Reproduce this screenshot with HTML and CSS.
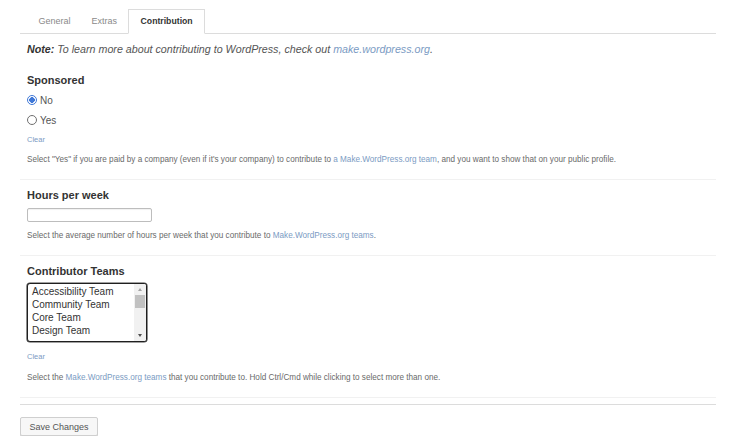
FILE: index.html
```html
<!DOCTYPE html>
<html lang="en">
<head>
<meta charset="utf-8">
<title>Contribution</title>
<link rel="stylesheet" href="styles.css">
</head>
<body>
<div class="wrap">
  <nav class="tabs">
    <a class="tab">General</a>
    <a class="tab">Extras</a>
    <a class="tab active">Contribution</a>
  </nav>

  <p class="note"><strong>Note:</strong> To learn more about contributing to WordPress, check out <a class="link" href="#">make.wordpress.org</a>.</p>

  <section class="field">
    <h3 class="label">Sponsored</h3>
    <label class="radio-row"><input type="radio" name="sp" class="radio" checked><span>No</span></label>
    <label class="radio-row"><input type="radio" name="sp" class="radio"><span>Yes</span></label>
    <a class="clear" href="#">Clear</a>
    <p class="desc desc-sp">Select "Yes" if you are paid by a company (even if it's your company) to contribute to <a class="link" href="#">a Make.WordPress.org team</a>, and you want to show that on your public profile.</p>
  </section>

  <section class="field">
    <h3 class="label">Hours per week</h3>
    <input type="text" class="text-input">
    <p class="desc desc-hours">Select the average number of hours per week that you contribute to <a class="link" href="#">Make.WordPress.org teams</a>.</p>
  </section>

  <section class="field">
    <h3 class="label">Contributor Teams</h3>
    <div class="listbox" role="listbox" aria-multiselectable="true">
      <div class="options">
        <div class="option" role="option">Accessibility Team</div>
        <div class="option" role="option">Community Team</div>
        <div class="option" role="option">Core Team</div>
        <div class="option" role="option">Design Team</div>
      </div>
      <div class="scrollbar">
        <span class="arrow up"></span>
        <span class="thumb"></span>
        <span class="arrow down"></span>
      </div>
    </div>
    <a class="clear clear-teams" href="#">Clear</a>
    <p class="desc desc-teams">Select the <a class="link" href="#">Make.WordPress.org teams</a> that you contribute to. Hold Ctrl/Cmd while clicking to select more than one.</p>
  </section>

  <div class="footer">
    <button class="btn" type="button">Save Changes</button>
  </div>
</div>
</body>
</html>
```

FILE: styles.css
```css
* { box-sizing: border-box; }
html, body { margin: 0; padding: 0; background: #fff; }
body {
  font-family: "Liberation Sans", Arial, sans-serif;
  color: #555;
}
.wrap {
  width: 696px;
  margin-left: 20px;
  padding-top: 9px;
}
.tabs {
  display: flex;
  height: 25px;
  padding-left: 8px;
  border-bottom: 1px solid #dcdcdc;
}
.tab {
  display: flex;
  align-items: center;
  height: 24px;
  padding: 0 10.5px;
  font-size: 9px;
  color: #8a8a8a;
}
.tab.active {
  height: 25px;
  padding: 0 11px 1px 12px;
  background: #fff;
  border: 1px solid #dcdcdc;
  border-bottom-color: #fff;
  font-size: 8.7px;
  font-weight: bold;
  color: #333;
}
.note {
  margin: 8px 0 9px 7px;
  font-size: 10.7px;
  line-height: 14px;
  font-style: italic;
  color: #555;
}
.note strong { color: #333; }
.link { color: #7b9bc3; text-decoration: none; }
.field {
  padding: 8px 0 13px 7px;
  border-bottom: 1px solid #f1f1f1;
}
.label {
  margin: 0;
  font-size: 11px;
  line-height: 14px;
  font-weight: bold;
  color: #333;
}
.radio-row {
  display: flex;
  align-items: center;
  height: 20px;
  font-size: 10px;
  color: #555;
}
.radio-row:first-of-type { margin-top: 3px; }
.radio {
  appearance: none;
  -webkit-appearance: none;
  width: 10px;
  height: 10px;
  margin: 0 3px 0 0;
  border: 1px solid #6f6f6f;
  border-radius: 50%;
  background: #fff;
}
.radio:checked {
  border-color: #3f78d8;
  background: radial-gradient(circle, #3f78d8 0 2.6px, #fff 3px);
}
.clear {
  display: block;
  margin-top: 5px;
  font-size: 7.5px;
  line-height: 10px;
  color: #7b9bc3;
  text-decoration: none;
}
.desc {
  margin: 9px 0 0;
  font-size: 8.17px;
  line-height: 12px;
  color: #6a6a6a;
}
.desc-hours { margin-top: 8px; }
.text-input {
  display: block;
  width: 125px;
  height: 14px;
  margin-top: 6px;
  border: 1px solid #bdbdbd;
  border-radius: 2px;
  box-shadow: inset 0 1px 1px rgba(0,0,0,.06);
  padding: 0;
}
.listbox {
  display: flex;
  width: 120px;
  height: 59px;
  margin-top: 5px;
  border: 1px solid #1f1f1f;
  border-radius: 3px;
  box-shadow: 0 0 0 0.6px #444;
  overflow: hidden;
  background: #fff;
}
.options {
  flex: 1;
  padding: 1px 0 0 4px;
}
.option {
  font-size: 10px;
  line-height: 13px;
  color: #333;
  white-space: nowrap;
}
.scrollbar {
  width: 12px;
  display: flex;
  flex-direction: column;
  align-items: center;
  background: #f1f1f1;
}
.arrow {
  width: 0;
  height: 0;
  border-left: 2.5px solid transparent;
  border-right: 2.5px solid transparent;
}
.arrow.up {
  margin-top: 4px;
  border-bottom: 3px solid #a3a3a3;
}
.arrow.down {
  margin-top: auto;
  margin-bottom: 4px;
  border-top: 3px solid #505050;
}
.thumb {
  width: 10px;
  height: 13px;
  margin-top: 4px;
  background: #c1c1c1;
}
.clear-teams { margin-top: 10px; }
.desc-teams { margin-top: 10px; }
.footer {
  margin-top: 6px;
  border-top: 1px solid #dcdcdc;
  padding-top: 12px;
}
.btn {
  display: block;
  width: 78px;
  height: 19px;
  padding: 0;
  font-family: "Liberation Sans", Arial, sans-serif;
  font-size: 9px;
  color: #555;
  background: #f7f7f7;
  border: 1px solid #cfcfcf;
  border-radius: 2px;
  box-shadow: 0 1px 0 #d6d6d6;
}
```
